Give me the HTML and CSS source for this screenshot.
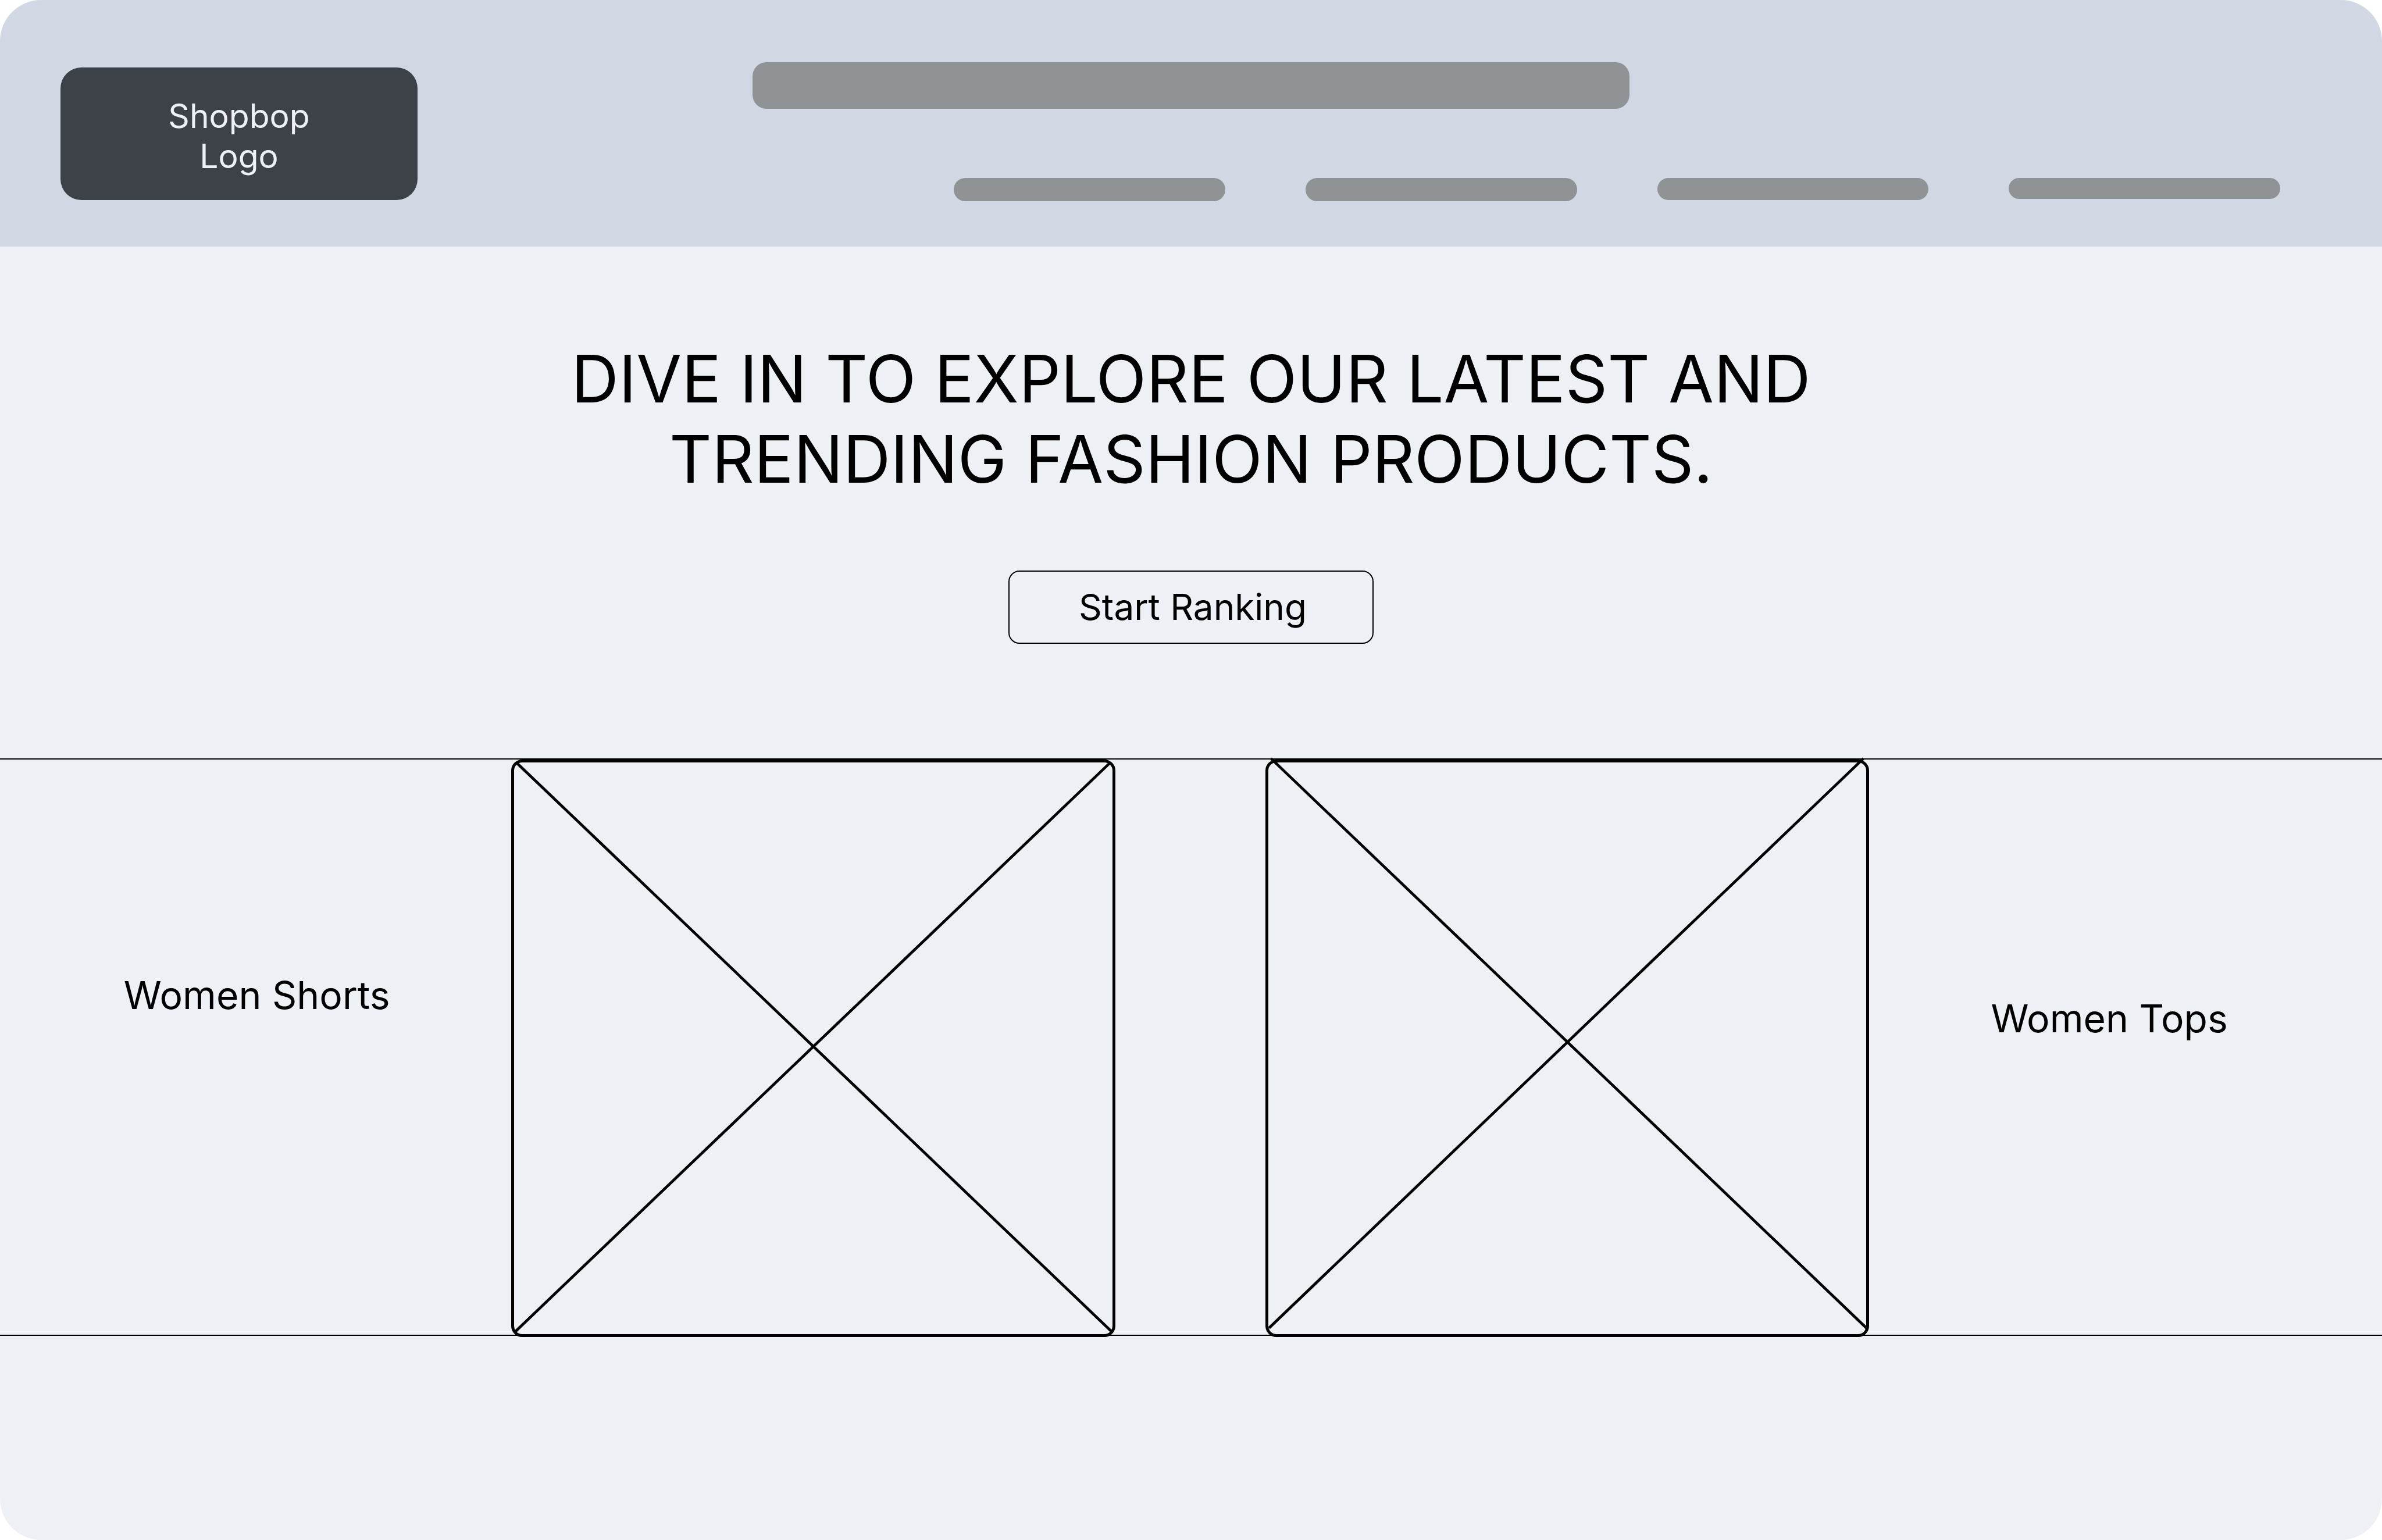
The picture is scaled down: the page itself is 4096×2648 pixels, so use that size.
FILE: index.html
```html
<!DOCTYPE html>
<html lang="en">
<head>
  <meta charset="utf-8">
  <meta name="viewport" content="width=device-width, initial-scale=1">
  <title>Shopbop</title>
  <link rel="stylesheet" href="styles.css">
</head>
<body>
  <div class="page">
    <header class="header">
      <a class="logo" href="#">Shopbop<br>Logo</a>
      <div class="header-main">
        <input class="search" type="search" aria-label="Search">
        <nav class="nav" aria-label="Main">
          <a class="nav-link" href="#" aria-label="Menu 1"></a>
          <a class="nav-link" href="#" aria-label="Menu 2"></a>
          <a class="nav-link nav-link-medium" href="#" aria-label="Menu 3"></a>
          <a class="nav-link nav-link-thin" href="#" aria-label="Menu 4"></a>
        </nav>
      </div>
    </header>

    <main>
      <section class="hero">
        <h1 class="hero-title">DIVE IN TO EXPLORE OUR LATEST AND<br>TRENDING FASHION PRODUCTS.</h1>
        <button class="start" type="button">Start Ranking</button>
      </section>

      <section class="band">
        <h2 class="label label-shorts">Women Shorts</h2>
        <div class="picture">
          <svg class="cross" viewBox="0 0 438 419" aria-hidden="true">
            <path d="M4.2 2.6 435.2 414.6M3.2 414.8 434 2.8"/>
          </svg>
        </div>
        <div class="picture picture-tops">
          <svg class="cross" viewBox="0 0 438 419" aria-hidden="true">
            <path d="M4 -.8 436 412.4M2.6 412.4 433.9 -.8"/>
          </svg>
        </div>
        <h2 class="label label-tops">Women Tops</h2>
      </section>
    </main>
  </div>
</body>
</html>
```

FILE: styles.css
```css
* {
  box-sizing: border-box;
}

body {
  margin: 0;
  background: #fff;
  color: #000;
  font-family: Inter, "Liberation Sans", sans-serif;
}

.page {
  min-height: 100vh;
  overflow: hidden;
  border-radius: 71px;
  background: #edf0f5;
}

/* Header */
.header {
  display: flex;
  align-items: flex-start;
  padding: 107px 175px 78px 104px;
  background: #d1d7e3;
}

.logo {
  flex: none;
  width: 15%;
  min-width: 614px;
  height: 228px;
  margin-top: 9px;
  padding-top: 49px;
  border-radius: 36px;
  background: #3d4148;
  color: #edf0f5;
  font-size: 57px;
  line-height: 69px;
  text-align: center;
  text-decoration: none;
}

.header-main {
  flex: 1;
}

.search {
  display: block;
  width: 1508px;
  max-width: 100%;
  height: 80px;
  margin: 0 0 119px 576px;
  padding: 0 36px;
  border: 0;
  border-radius: 24px;
  background: #8f9395;
  appearance: none;
}

.nav {
  display: grid;
  grid-template-columns: repeat(4, 1fr);
  gap: 138px;
  margin-left: 922px;
}

.nav-link {
  height: 40px;
  border-radius: 24px;
  background: #8f9395;
}

.nav-link-medium {
  height: 38px;
}

.nav-link-thin {
  height: 36px;
}

/* Hero */
.hero {
  display: flex;
  flex-direction: column;
  align-items: center;
  gap: 123px;
  padding: 158px 0 197px;
}

.hero-title {
  margin: 0;
  font-size: 113px;
  font-weight: 400;
  line-height: 138px;
  text-align: center;
}

.start {
  width: 628px;
  height: 126px;
  padding: 0 0 0 6px;
  border: 2px solid #000;
  border-radius: 19px;
  background: transparent;
  color: inherit;
  font: 400 62px/76px Inter, "Liberation Sans", sans-serif;
}

/* Product band */
.band {
  display: grid;
  grid-template-columns: 371fr 438fr 109fr 438fr 372fr;
  border-top: 2px solid #000;
  border-bottom: 2px solid #000;
}

.label {
  margin: 0;
  font-size: 66px;
  font-weight: 400;
  line-height: 80px;
  text-align: center;
}

.label-shorts {
  padding: 365px 0 0 4px;
}

.label-tops {
  padding: 405px 56px 0 0;
}

.picture {
  position: relative;
  aspect-ratio: 438 / 419;
  margin-bottom: -4px;
  border: 5px solid #000;
  border-radius: 19px;
}

.picture-tops {
  grid-column: 4;
}

.cross {
  position: absolute;
  inset: -5px;
  overflow: visible;
  fill: none;
  stroke: #000;
  stroke-width: 2;
}
```
